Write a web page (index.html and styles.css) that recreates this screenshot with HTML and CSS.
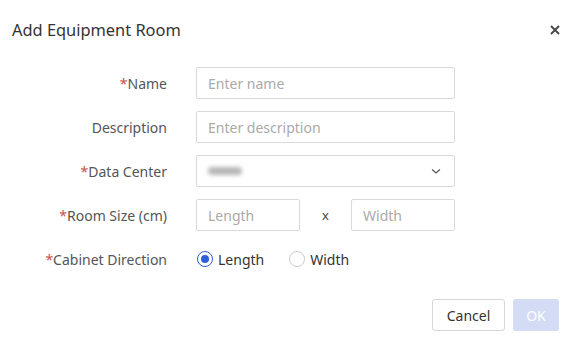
FILE: index.html
```html
<!DOCTYPE html>
<html lang="en">
<head>
    <meta charset="UTF-8">
    <title>Add Equipment Room</title>
    <link rel="stylesheet" href="styles.css">
</head>
<body>
    <div class="dialog">
        <div class="dialog-header">
            <h1 class="dialog-title">Add Equipment Room</h1>
            <svg class="dialog-close" width="10" height="10" viewBox="0 0 10 10">
                <path d="M1 1 L9 9 M9 1 L1 9" stroke="#444" stroke-width="1.8"/>
            </svg>
        </div>

        <form class="room-form">
            <div class="form-row">
                <label class="form-label"><span class="req">*</span>Name</label>
                <input class="field field-wide" type="text" placeholder="Enter name">
            </div>
            <div class="form-row">
                <label class="form-label">Description</label>
                <input class="field field-wide" type="text" placeholder="Enter description">
            </div>
            <div class="form-row">
                <label class="form-label"><span class="req">*</span>Data Center</label>
                <div class="field field-wide select">
                    <span class="blurred"></span>
                    <svg class="chevron" width="12" height="12" viewBox="0 0 12 12">
                        <path d="M2 4.5 L6 8 L10 4.5" fill="none" stroke="#555" stroke-width="1.2"/>
                    </svg>
                </div>
            </div>
            <div class="form-row">
                <label class="form-label"><span class="req">*</span>Room Size (cm)</label>
                <div class="size-group">
                    <input class="field field-half" type="text" placeholder="Length">
                    <span class="times">x</span>
                    <input class="field field-half" type="text" placeholder="Width">
                </div>
            </div>
            <div class="form-row">
                <label class="form-label"><span class="req">*</span>Cabinet Direction</label>
                <div class="radio-group">
                    <span class="radio checked"><span class="dot"></span></span>
                    <span class="radio-text">Length</span>
                    <span class="radio"></span>
                    <span class="radio-text">Width</span>
                </div>
            </div>
        </form>

        <div class="dialog-footer">
            <button class="btn btn-cancel" type="button">Cancel</button>
            <button class="btn btn-ok" type="button" disabled>OK</button>
        </div>
    </div>
</body>
</html>
```

FILE: styles.css
```css
/* Base */
* {
    box-sizing: border-box;
}

body {
    margin: 0;
    padding: 0;
    background: #fff;
    font-family: 'Noto Sans', sans-serif;
    color: #333;
}

.dialog {
    width: 581px;
    height: 344px;
}

/* Header */
.dialog-header {
    display: flex;
    justify-content: space-between;
    align-items: center;
    padding: 19px 12px 0 12px;
    height: 41px;
}

.dialog-title {
    margin: 0;
    font-size: 16.4px;
    font-weight: 400;
    color: #333;
    line-height: 22px;
}

.dialog-close {
    margin-right: 9px;
}

/* Form */
.room-form {
    display: flex;
    flex-direction: column;
    gap: 12px;
    margin-top: 26px;
}

.form-row {
    display: flex;
    align-items: center;
    height: 32px;
}

.form-label {
    width: 168px;
    padding-right: 1px;
    text-align: right;
    font-size: 14px;
    color: #555;
    margin-right: 28px;
}

.req {
    color: #c9514b;
}

.field {
    height: 32px;
    border: 1px solid #d9d9d9;
    border-radius: 2px;
    padding: 0 11px;
    font-family: 'Noto Sans', sans-serif;
    font-size: 14px;
    color: #333;
    background: #fff;
    outline: none;
}

.field::placeholder {
    color: #aaa;
}

.field-wide {
    width: 259px;
}

.field-half {
    width: 104px;
}

.select {
    display: flex;
    align-items: center;
    justify-content: space-between;
}

.blurred {
    width: 34px;
    height: 8px;
    border-radius: 4px;
    background: #b5b5b5;
    filter: blur(2px);
}

.chevron {
    margin-right: 1px;
}

.size-group {
    display: flex;
    align-items: center;
}

.times {
    width: 51px;
    text-align: center;
    font-size: 13px;
    color: #444;
}

/* Radios */
.radio-group {
    display: flex;
    align-items: center;
    padding-left: 1px;
}

.radio {
    width: 16px;
    height: 16px;
    border-radius: 50%;
    border: 1px solid #ccc;
    display: flex;
    align-items: center;
    justify-content: center;
}

.radio.checked {
    border-color: #2d5fd8;
}

.dot {
    width: 8px;
    height: 8px;
    border-radius: 50%;
    background: #2d5fd8;
}

.radio-text {
    font-size: 14px;
    color: #333;
    margin: 0 25px 0 5px;
}

/* Footer */
.dialog-footer {
    display: flex;
    justify-content: flex-end;
    gap: 8px;
    padding-right: 22px;
    margin-top: 24px;
}

.btn {
    height: 32px;
    border-radius: 3px;
    font-family: 'Noto Sans', sans-serif;
    font-size: 14px;
    padding: 0;
}

.btn-cancel {
    width: 73px;
    border: 1px solid #d6d6d6;
    background: #fff;
    color: #333;
}

.btn-ok {
    width: 46px;
    border: none;
    background: #d3dcf4;
    color: #fff;
}
```
